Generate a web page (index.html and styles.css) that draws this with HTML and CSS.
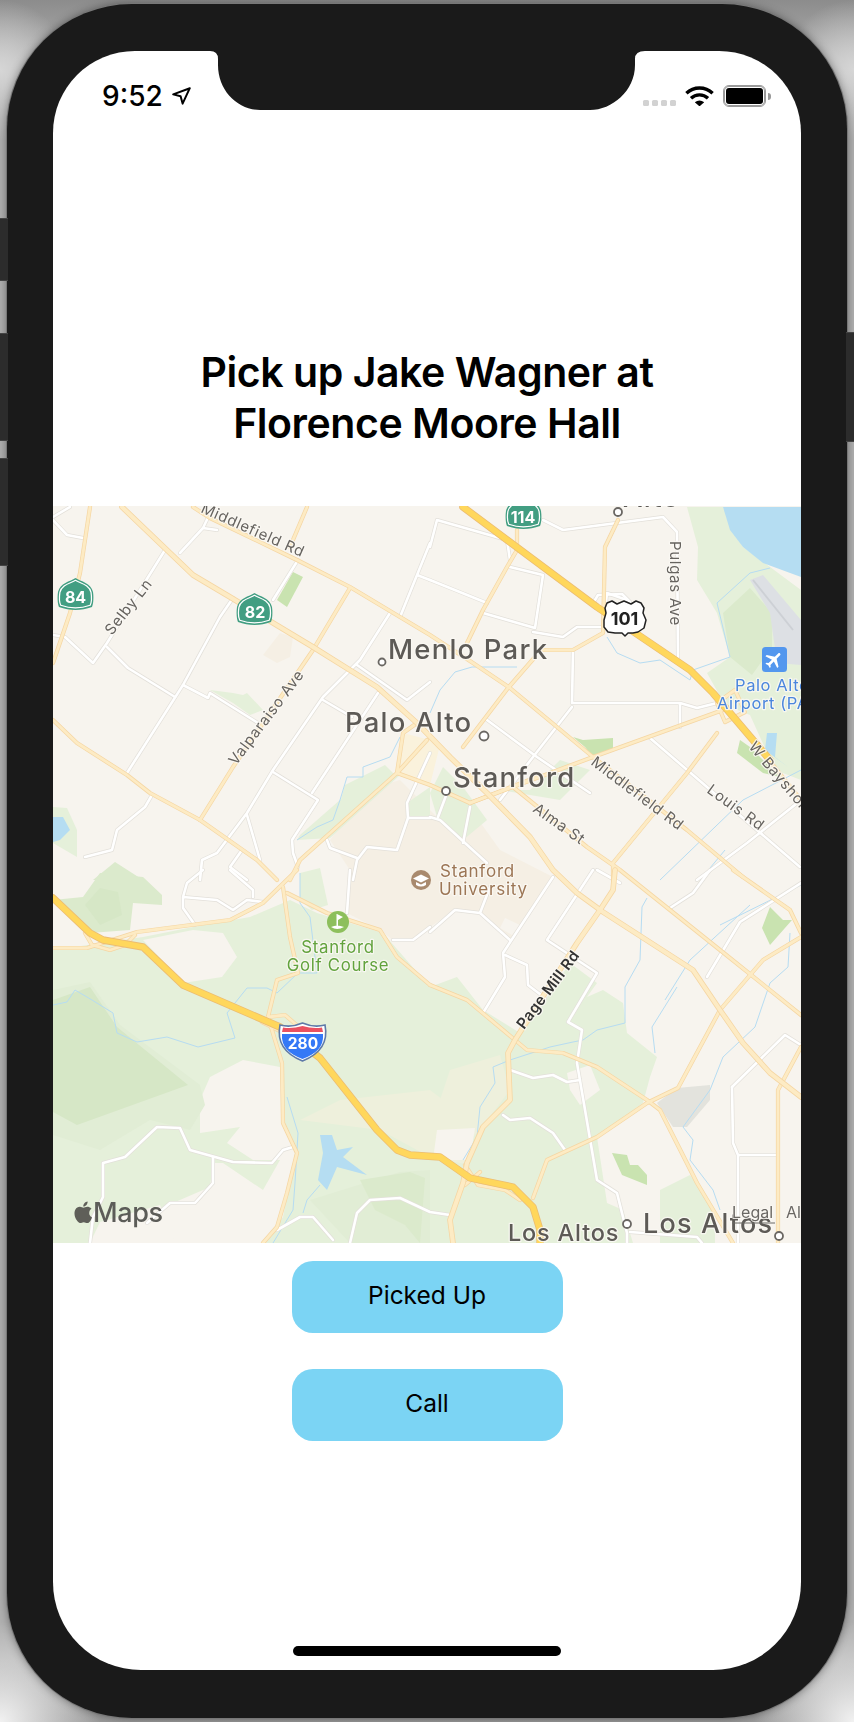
FILE: index.html
```html
<!DOCTYPE html>
<html lang="en">
<head>
<meta charset="utf-8">
<title>Pick up</title>
<link rel="stylesheet" href="styles.css">
</head>
<body>
<div class="device">
  <span class="side side-l1"></span>
  <span class="side side-l2"></span>
  <span class="side side-l3"></span>
  <span class="side side-r1"></span>
  <main class="screen">
    <svg class="notch" viewBox="0 0 435 59" width="435" height="59" aria-hidden="true">
      <path d="M0 0Q8 0 8 8V14C8 40 28 59 50 59H380C402 59 425 40 425 14V8Q425 0 435 0Z"/>
    </svg>
    <header class="status">
      <div class="status-left">
        <span class="time">9:52</span>
        <svg class="loc" viewBox="0 0 19 18" width="19" height="18"><path d="M1.2 7.4 17.8 1.2 10.6 16.6 8.6 9.2Z"/></svg>
      </div>
      <div class="status-right">
        <span class="signal"><i></i><i></i><i></i><i></i></span>
        <svg class="wifi" viewBox="0 0 29 21" width="29" height="21">
          <path class="wifi-arc" d="M1.4 8.2A19 19 0 0 1 27.6 8.2"/>
          <path class="wifi-arc" d="M6 13.2A12.4 12.4 0 0 1 23 13.2"/>
          <path class="wifi-dot" d="M9.8 17.2Q14.5 13.8 19.2 17.2L14.5 21.4Z"/>
        </svg>
        <span class="battery"><span class="battery-fill"></span></span>
        <span class="battery-cap"></span>
      </div>
    </header>
    <h1 class="title">Pick up Jake Wagner at<br>Florence Moore Hall</h1>

    <svg class="map" viewBox="53 506 748 737" width="748" height="737" role="img" aria-label="Map of Palo Alto and Stanford">
      <defs>
        <g id="minor">
          <path d="M127 773 183 685 220 617 233 598"/>
          <path d="M53 635 65 637 93 663 107 643 165 550"/>
          <path d="M107 647 128 668 175 697"/>
          <path d="M183 685 208 698 210 693 258 723"/>
          <path d="M53 520 67 535 83 538M53 517 70 507"/>
          <path d="M180 553 203 528 217 530M203 528 213 507"/>
          <path d="M273 600 298 560"/>
          <path d="M390 613 360 660 323 697 273 770 247 813 217 853 202 860 200 880"/>
          <path d="M273 772 318 800 292 840 293 853 298 867"/>
          <path d="M378 693 312 793"/>
          <path d="M323 700 352 717"/>
          <path d="M357 665 407 700 430 682"/>
          <path d="M400 617 430 543M417 575 430 580"/>
          <path d="M152 795 145 807 117 830 112 850 85 857"/>
          <path d="M247 815 260 860M242 850 230 867 247 880"/>
          <path d="M430 753 407 803 408 818 430 818"/>
          <path d="M408 818 397 850 367 847 357 860 353 880M327 840 330 848 357 858"/>
          <path d="M437 520 507 540 510 560M437 520 430 547"/>
          <path d="M543 520 563 530 663 517 677 532 678 657"/>
          <path d="M510 567 543 575 535 628 483 613M430 580 487 603"/>
          <path d="M533 632 563 637 577 627 603 627 607 593 627 600"/>
          <path d="M573 650 572 703H680L697 708 717 703M680 703V727"/>
          <path d="M572 707 533 757 500 800"/>
          <path d="M487 720 537 757 590 793"/>
          <path d="M650 738 800 867"/>
          <path d="M801 800 747 843 697 880"/>
          <path d="M430 817 440 820 465 843 487 863"/>
          <path d="M447 793 438 817M470 807 463 843"/>
          <path d="M593 870 547 940 597 973 568 1022 582 1030 577 1063 597 1180 617 1193 627 1233V1243"/>
          <path d="M553 877 503 953 505 977 483 1013"/>
          <path d="M505 955 527 965 528 985 545 998"/>
          <path d="M430 932 455 910 480 913 510 940M480 913 490 887"/>
          <path d="M510 1070 533 1078 553 1075 567 1082 580 1080"/>
          <path d="M503 1115 510 1120 530 1118 553 1133 565 1150"/>
          <path d="M597 870 620 883M670 908 693 893 710 870"/>
          <path d="M707 977 740 922 801 883"/>
          <path d="M732 1087 733 1143 738 1155V1243M738 1155H778"/>
          <path d="M732 1087 785 1035 801 1045"/>
          <path d="M630 1232 697 1237 702 1243"/>
          <path d="M183 897 217 900 233 910 247 900 263 902M183 897V908L195 925M203 870 187 883 183 897M230 870 253 890V897"/>
          <path d="M350 870 347 913M393 940H413L430 927"/>
          <path d="M90 1243 93 1217 103 1197V1163L125 1157 157 1127 180 1128 190 1150 233 1162 272 1163 283 1150 293 1147"/>
          <path d="M213 1157V1183L195 1203H170L147 1223"/>
          <path d="M277 1230 300 1217H313L333 1240"/>
          <path d="M350 1243 357 1213 370 1200 400 1198 430 1212 450 1215"/>
          <path d="M592 605 598 595 622 594 630 602"/>
        </g>
        <g id="arterial">
          <path d="M193 507 210 518 297 560 350 587 430 635 473 663 510 688 557 727 593 757 687 830 743 877"/>
          <path d="M733 870 790 910 801 933"/>
          <path d="M513 787 587 847 620 870 720 950 801 1015"/>
          <path d="M200 820 233 767 313 650 350 588"/>
          <path d="M307 507 290 547"/>
          <path d="M470 803 593 757 723 710"/>
          <path d="M467 643 483 610 507 567 517 550V530"/>
          <path d="M543 650H573L603 633 605 547 618 520"/>
          <path d="M535 657 508 688 463 747"/>
          <path d="M717 733 687 773 613 863V880"/>
          <path d="M430 985 467 1000 515 1040 527 1050 563 1053 597 1067 647 1100 660 1110 697 1183 733 1243"/>
          <path d="M533 1198 547 1160 597 1137 647 1103 678 1088 720 1010 763 960 801 937"/>
          <path d="M778 1243V1090L801 1047"/>
          <path d="M53 948H87L137 932 230 920 263 903 297 870"/>
          <path d="M290 880 300 860 397 773 427 740"/>
          <path d="M283 887 290 937 298 973 277 980 268 1017 282 1063 283 1123 297 1153 287 1193 277 1227 263 1243"/>
          <path d="M287 893 327 913 380 930 397 957 430 985"/>
          <path d="M53 720 77 743 127 775 150 793 200 820 257 860 277 880"/>
          <path d="M90 507 80 573 70 613 53 663"/>
          <path d="M397 773 403 733 417 723M397 773 430 785 470 803 537 777"/>
          <path d="M753 740 801 800"/>
          <path d="M85 933 92 945 110 950 125 945 135 935M268 1017 285 1015 300 1028M262 1022 282 1032"/>
          <path d="M465 1165 478 1185 505 1190 520 1200M465 1185 480 1172"/>
          <path d="M717 703 735 690 745 712 725 722Z"/>
        </g>
        <g id="primary">
          <path d="M122 507 193 575 230 597 313 647 377 687 417 723 450 757 487 793 530 837 553 870 577 893 603 912 693 970 720 1010 743 1043 770 1073 801 1097"/>
          <path d="M615 870 613 890 600 910 577 943 515 1040 508 1053 510 1100 483 1127 467 1163 463 1183 450 1220 453 1243"/>
        </g>
        <g id="highway">
          <path d="M53 898 90 933 103 940 143 947 183 985 280 1027 320 1058 377 1130 397 1150 410 1155 440 1157 470 1178 513 1187 533 1207 540 1230V1243"/>
          <path d="M463 507 597 607 690 670 713 693 753 740 770 760"/>
        </g>
        <path id="state-shield" d="M18.5 1C24 4.500 34 6 36 15 37 22 36 28 35 30 24 34 13 34 2 30 1 28 0 22 1 15 3 6 13 4.500 18.500 1Z"/>
      </defs>

      <rect class="land" x="53" y="506" width="748" height="737"/>

      <!-- parkland and terrain -->
      <path class="g-light" d="M53 950 143 937 193 927 250 917 290 900 317 913 383 933 430 987 457 977 483 1010 520 1033 543 1003 570 963 597 983 587 997 603 990 623 1003 627 1033 657 1057 650 1077 643 1103 597 1137 607 1203 623 1210 633 1243H53Z"/>
      <path class="g-mid" d="M53 900 83 897 100 873 143 877 162 895 162 905 133 903 130 930 90 933Z"/>
      <path class="g-mid2" d="M85 905 100 888 118 892 122 915 100 925Z"/>
      <path class="g-light" d="M300 873 320 868 328 905 312 910 300 900Z"/>
      <path class="land" d="M143 940 193 930 223 933 237 957 222 977 183 983 160 958Z"/>
      <path class="land" d="M200 1100 210 1077 243 1060 280 1067 283 1123 295 1153 283 1217 263 1243H150L143 1223 173 1203 210 1187 213 1163 223 1163 263 1190 280 1160 253 1160 227 1143 240 1127 200 1133Z"/>
      <path class="land" d="M90 1243 100 1222 160 1205 175 1243Z"/>
      <path class="g-soft" d="M53 990 90 982 120 1025 200 1085 205 1105 190 1130 150 1120 100 1150 53 1135Z"/>
      <path class="g-mid2" d="M53 1000 90 987 117 1027 188 1085 77 1125 53 1112Z"/>
      <path class="g-soft" d="M310 1200 400 1172 430 1170 430 1243H350Z"/>
      <path class="g-mid" d="M360 1180 410 1172 425 1178 420 1243 405 1225 375 1210Z"/>
      <path class="g-cream" d="M300 1120 340 1100 430 1090 470 1120 470 1165 430 1157 380 1130Z"/>
      <path class="g-cream" d="M450 1070 500 1055 510 1090 480 1130 460 1150 430 1130Z"/>
      <path class="land" d="M437 1130 475 1128 470 1160 433 1160Z"/>
      <path class="tan" d="M330 840 367 790 400 780 440 820 470 808 500 850 553 877 510 940 480 913 455 910 430 927 413 940 393 940 380 930 347 913 350 870Z"/>
      <path class="land" d="M505 918 520 925 512 935 500 928Z"/>
      <path class="yellow" d="M403 733 430 740 440 745 430 785 397 773Z"/>
      <path class="g-light" d="M430 793 443 767 463 787 487 820 463 840 437 817Z"/>
      <path class="g-light" d="M407 803 430 787 430 816 408 818Z"/>
      <path class="tan" d="M263 655 280 633 293 637 290 657 277 663Z"/>
      <path class="g-light" d="M210 690 233 693 243 695 247 693 263 710 250 715 233 703Z"/>
      <path class="g-light" d="M297 840 330 838 400 775 397 775 340 800 300 835Z"/>
      <path class="g-light" d="M335 820 345 785 385 765 395 775 360 805Z"/>
      <path class="g-light" d="M53 807 67 808 77 830 77 857 53 843Z"/>
      <path class="g-mid" d="M93 880 115 862 143 880Z"/>
      <path class="g-light" d="M687 507 723 507 743 547 801 590 801 780 775 770 750 715 725 705 707 673 730 657 717 613 697 580 698 547Z"/>
      <path class="g-mid" d="M723 613 750 588 772 613 772 647 752 675 730 657Z"/>
      <path class="g-light" d="M500 790 530 790 560 760 590 770 560 800Z"/>
      <path class="land" d="M567 1073 590 1065 600 1090 580 1105 570 1090Z"/>

      <!-- parks -->
      <path class="park" d="M277 600 293 572 303 577 287 607Z"/>
      <path class="park" d="M740 740 750 747 780 777 763 773 737 753Z"/>
      <path class="park" d="M573 737 583 740 613 738V750L593 757 585 747Z"/>
      <path class="park" d="M612 1153 627 1155 630 1165H638L647 1175V1185L622 1175Z"/>
      <path class="park" d="M770 907 783 920H792L770 945 762 928Z"/>
      <path class="g-light" d="M660 1190 690 1175 715 1210 715 1243 660 1243Z"/>
      <path class="grey" d="M657 1103 677 1088 710 1085V1100L687 1127H673Z"/>

      <!-- water -->
      <path class="water" d="M723 507H801V577L763 563 743 547 730 530Z"/>
      <path class="water" d="M792 633 801 620V643Z"/>
      <path class="water" d="M767 733H777L775 757 788 767 765 750Z"/>
      <path class="water" d="M53 817H63L70 830 60 840 53 842Z"/>
      <path class="water" d="M320 1135H332L337 1150 353 1147 343 1157 367 1175 337 1167 327 1190 318 1180 323 1153Z"/>

      <!-- airport -->
      <path class="airfield" d="M750 580 763 575 801 620V665L777 663 770 613Z"/>
      <path class="runway" d="M753 580 793 630"/>

      <!-- streams -->
      <g class="stream">
        <path d="M647 898 642 907 640 960 625 987V1023L597 1030 583 1040 573 1042 550 1047 510 1060 493 1067 495 1083 480 1107 477 1137 463 1160"/>
        <path d="M677 987 652 1027 655 1053"/>
        <path d="M790 933 788 967 770 983 755 1027 723 1057 710 1090 683 1127 693 1140 690 1160 713 1190 720 1210"/>
        <path d="M53 1005 67 1002 75 990 92 1000 113 1013 117 1033 137 1042 167 1037 198 1047 235 1038 227 1013 247 988H267L277 993 298 973H317L310 917 300 903V873"/>
        <path d="M287 1097 298 1133 295 1183 293 1210 273 1243"/>
        <path d="M320 1185 307 1200 303 1213"/>
        <path d="M297 840 317 827 333 820 340 800 347 777H363V767L390 757 400 737"/>
        <path d="M430 713 440 690 455 672 472 667H517"/>
        <path d="M607 637 617 653 640 663 660 660 690 680 693 670 730 657 717 603 750 573 770 568"/>
        <path d="M660 880 743 800 801 770"/>
        <path d="M700 880 725 850"/>
        <path d="M750 905 690 960 665 1000"/>
        <path d="M801 885 720 925"/>
      </g>

      <!-- roads -->
      <use href="#minor" class="road minor-casing"/>
      <use href="#minor" class="road minor-fill"/>
      <use href="#arterial" class="road arterial-casing"/>
      <use href="#arterial" class="road arterial-fill"/>
      <use href="#primary" class="road primary-casing"/>
      <use href="#primary" class="road primary-fill"/>
      <use href="#highway" class="road highway-casing"/>
      <use href="#highway" class="road highway-fill"/>

      <!-- shields -->
      <use href="#state-shield" class="shield-state" x="57" y="577"/>
      <use href="#state-shield" class="shield-state" x="236" y="592"/>
      <use href="#state-shield" class="shield-state" x="505" y="496"/>
      <g class="shield-inner">
        <use href="#state-shield" transform="translate(59 579.500) scale(.89 .86)"/>
        <use href="#state-shield" transform="translate(238 594.500) scale(.89 .86)"/>
        <use href="#state-shield" transform="translate(507 498.500) scale(.89 .86)"/>
      </g>
      <text class="shield-num" x="75.500" y="602.500">84</text>
      <text class="shield-num" x="255" y="617.500">82</text>
      <text class="shield-num" x="523" y="522.500">114</text>

      <path class="shield-us" d="M607 603 612 601 617 604 624 601 631 604 636 601 641 603 644 608 643 613 646 620 644 628 638 632 633 633 628 633 625 636 622 633 615 633 608 632 604 627 604 620 606 613 605 608Z"/>
      <text class="shield-us-num" x="624.500" y="625">101</text>

      <path class="shield-i" d="M280 1025Q291 1028 302.500 1023 314 1028 325 1025 330 1050 302.500 1061 275 1050 280 1025Z"/>
      <path class="shield-i-red" d="M283 1027.500Q292 1029 302.500 1026 313 1029 322 1027.500L323 1032H282Z"/>
      <path class="shield-i-blue" d="M282 1034H323C324 1047 316 1054 302.500 1059 289 1054 281 1047 282 1034Z"/>
      <text class="shield-i-num" x="303" y="1049">280</text>

      <!-- place dots -->
      <circle class="dot" cx="382" cy="662" r="3.500"/>
      <circle class="dot" cx="484" cy="736" r="4.500"/>
      <circle class="dot" cx="446" cy="791" r="4"/>
      <circle class="dot" cx="618" cy="512" r="4"/>
      <circle class="dot" cx="627" cy="1224" r="4"/>
      <circle class="dot" cx="779" cy="1236" r="4"/>

      <!-- labels -->
      <text class="place" x="388" y="659">Menlo Park</text>
      <text class="place" x="345" y="732">Palo Alto</text>
      <text class="place" x="453" y="787">Stanford</text>
      <text class="place" x="623" y="507">Alto</text>
      <text class="place place-sm" x="508" y="1241">Los Altos</text>
      <text class="place place-md" x="643" y="1233">Los Altos</text>

      <text class="street" transform="translate(200 512) rotate(24)">Middlefield Rd</text>
      <text class="street" transform="translate(112 636) rotate(-52)">Selby Ln</text>
      <text class="street" transform="translate(236 766) rotate(-53)">Valparaiso Ave</text>
      <text class="street" transform="translate(670 541) rotate(90)">Pulgas Ave</text>
      <text class="street" transform="translate(532 811) rotate(35)">Alma St</text>
      <text class="street" transform="translate(590 764) rotate(37)">Middlefield Rd</text>
      <text class="street" transform="translate(706 792) rotate(36)">Louis Rd</text>
      <text class="street" transform="translate(748 747) rotate(50)">W Bayshore</text>
      <text class="street street-dark" transform="translate(524 1030) rotate(-53)">Page Mill Rd</text>

      <rect class="airport-badge" x="762" y="647" width="25" height="25" rx="3.500"/>
      <path class="airport-plane" transform="translate(764 649.500) rotate(45 10.500 10) scale(.88)" d="M21 16v-2l-8-5V3.500c0-.83-.67-1.500-1.500-1.500S10 2.670 10 3.500V9l-8 5v2l8-2.500V19l-2 1.500V22l3.500-1 3.500 1v-1.500L13 19v-5.500l8 2.500z"/>
      <text class="airport" x="735" y="691">Palo Alto</text>
      <text class="airport" x="717" y="709">Airport (PAO)</text>

      <circle class="poi-uni" cx="421" cy="880" r="10"/>
      <path class="poi-glyph" d="M421 874.500 429 878.500 421 882.500 413 878.500ZM416 882V885Q421 888 426 885V882L421 884.500Z"/>
      <text class="uni" x="440" y="877">Stanford</text>
      <text class="uni" x="439" y="895">University</text>

      <circle class="poi-golf" cx="338" cy="922" r="11"/>
      <path class="poi-glyph" d="M337 914 343 917 338 920V926H336.500V914ZM331 927Q337 924 344 927 337 931 331 927Z"/>
      <text class="golf" x="338" y="953">Stanford</text>
      <text class="golf" x="338" y="971">Golf Course</text>

      <path class="apple" transform="translate(72.500 1201.500) scale(.9)" d="M12.152 6.896c-.948 0-2.415-1.078-3.960-1.040-2.040.027-3.910 1.183-4.961 3.014-2.117 3.675-.546 9.103 1.519 12.090 1.013 1.454 2.208 3.090 3.792 3.039 1.520-.065 2.090-.987 3.935-.987 1.831 0 2.350.987 3.960.948 1.637-.026 2.676-1.480 3.676-2.948 1.156-1.688 1.636-3.325 1.662-3.415-.039-.013-3.182-1.221-3.220-4.857-.026-3.040 2.480-4.494 2.597-4.559-1.429-2.090-3.623-2.324-4.390-2.376-2-.156-3.675 1.090-4.610 1.090zM15.530 3.830c.843-1.012 1.400-2.427 1.245-3.830-1.207.052-2.662.805-3.532 1.818-.780.896-1.454 2.338-1.273 3.714 1.338.104 2.715-.688 3.559-1.701"/>
      <text class="maps-word" x="93" y="1222">Maps</text>
      <text class="legal" x="732" y="1218">Legal</text>
      <path class="legal-line" d="M732 1223H775"/>
      <text class="legal" x="786" y="1218">Alto</text>
    </svg>

    <div class="actions">
      <button class="action" type="button">Picked Up</button>
      <button class="action" type="button">Call</button>
    </div>
    <div class="home-indicator"></div>
  </main>
</div>
</body>
</html>
```
FILE: styles.css
```css
* { box-sizing: border-box; }

html, body { margin: 0; height: 100%; }

body {
  width: 854px;
  height: 1722px;
  padding: 4px 7px 0;
  overflow: hidden;
  background:
    radial-gradient(circle at 0 1722px, #f2f2f2 0, rgba(242,242,242,0) 100px),
    radial-gradient(circle at 854px 1722px, #f2f2f2 0, rgba(242,242,242,0) 100px),
    radial-gradient(circle at 0 70px, #d6d6d6 0, rgba(214,214,214,0) 70px),
    radial-gradient(circle at 854px 70px, #d6d6d6 0, rgba(214,214,214,0) 70px),
    linear-gradient(#8c8c8c 0, #b0b0b0 60px, #b0b0b0 1660px, #9a9a9a 1722px);
  font-family: Inter, "Liberation Sans", sans-serif;
}

.device {
  position: relative;
  width: 840px;
  height: 1714px;
  padding: 47px 46px 48px;
  background: #1a1a1a;
  border-radius: 125px;
  box-shadow: 0 0 0 1px #777, 0 0 10px rgba(0,0,0,.45);
}

.side {
  position: absolute;
  width: 8px;
  background: #2c2c2c;
  border-top: 1px solid #444;
  border-bottom: 1px solid #444;
}
.side-l1 { left: -7px; top: 214px; height: 63px; }
.side-l2 { left: -7px; top: 329px; height: 108px; }
.side-l3 { left: -7px; top: 454px; height: 108px; }
.side-r1 { right: -7px; top: 328px; height: 110px; }

.screen {
  position: relative;
  display: flex;
  flex-direction: column;
  align-items: center;
  width: 748px;
  height: 1619px;
  background: #fff;
  border-radius: 82px 82px 88px 88px;
  overflow: hidden;
}

.notch {
  position: absolute;
  left: 157px;
  top: 0;
  fill: #1a1a1a;
}

.status {
  display: flex;
  justify-content: space-between;
  align-self: stretch;
  height: 80px;
  padding: 0 30px 0 49px;
}

.status-left {
  display: flex;
  align-items: center;
  gap: 9px;
  height: 30px;
  margin-top: 30px;
}

.time {
  font-size: 28px;
  line-height: 30px;
  font-weight: 500;
  color: #000;
}

.loc {
  fill: none;
  stroke: #000;
  stroke-width: 2;
  stroke-linejoin: round;
}

.status-right {
  display: flex;
  align-items: flex-start;
  height: 22px;
  margin-top: 34px;
}

.signal {
  display: flex;
  gap: 3px;
  margin: 15px 9px 0 0;
}
.signal i {
  width: 6px;
  height: 6px;
  border-radius: 1.5px;
  background: #d2d2d2;
}

.wifi { margin-right: 9px; }
.wifi-arc { fill: none; stroke: #000; stroke-width: 3.4; }
.wifi-dot { fill: #000; }

.battery {
  display: block;
  width: 43px;
  height: 22px;
  padding: 2px;
  border: 1px solid #9a9a9a;
  box-shadow: inset 0 0 0 1px #9a9a9a;
  border-radius: 6px;
  background: #fff;
}
.battery-fill {
  display: block;
  width: 100%;
  height: 100%;
  background: #000;
  border-radius: 3px;
}
.battery-cap {
  width: 3px;
  height: 7px;
  margin: 8px 0 0 2px;
  background: #9a9a9a;
  border-radius: 0 3px 3px 0;
}

.title {
  margin: 216px 0 0;
  height: 159px;
  font-size: 41px;
  line-height: 51px;
  font-weight: 600;
  letter-spacing: -.45px;
  color: #000;
  text-align: center;
}

.map {
  display: block;
  flex: none;
  filter: blur(.35px);
}

.actions {
  display: flex;
  flex-direction: column;
  align-items: center;
  gap: 36px;
  padding-top: 18px;
}

.action {
  display: block;
  width: 271px;
  height: 72px;
  padding: 0 0 4px;
  border: 0;
  border-radius: 21px;
  background: #7bd4f4;
  color: #000;
  font: 400 24.5px/30px Inter, "Liberation Sans", sans-serif;
}

.home-indicator {
  width: 268px;
  height: 10px;
  margin: auto 0 14px;
  background: #000;
  border-radius: 5px;
}

/* map surfaces */
.land { fill: #f7f4ee; }
.g-light { fill: #e5f0da; }
.g-soft { fill: #e1edd5; }
.g-mid { fill: #dbeacc; }
.g-mid2 { fill: #d6e7c6; }
.g-cream { fill: #eef0dc; }
.tan { fill: #f5efe4; }
.yellow { fill: #faf2dc; }
.park { fill: #c9e3b0; }
.grey { fill: #e3e3dd; }
.water { fill: #b5ddf2; }
.airfield { fill: #dde0e4; }
.runway { fill: none; stroke: #cdd0d5; stroke-width: 2; }
.stream { fill: none; stroke: #b6dcf2; stroke-width: 1; }

/* roads */
.road { fill: none; stroke-linejoin: round; stroke-linecap: round; }
.minor-casing { stroke: #e3e0da; stroke-width: 4; }
.minor-fill { stroke: #fff; stroke-width: 2.6; }
.arterial-casing { stroke: #f5d6a3; stroke-width: 4.2; }
.arterial-fill { stroke: #fdebc4; stroke-width: 2.8; }
.primary-casing { stroke: #f5d6a3; stroke-width: 5.6; }
.primary-fill { stroke: #fdebc4; stroke-width: 4; }
.highway-casing { stroke: #ecbd72; stroke-width: 7.4; }
.highway-fill { stroke: #ffd75c; stroke-width: 5.8; }

/* shields */
.shield-state { fill: #429e82; }
.shield-inner { fill: none; stroke: #fff; stroke-width: 1.4; }
.shield-num {
  font: 700 16px Inter, sans-serif;
  fill: #fff;
  text-anchor: middle;
}
.shield-us { fill: #fff; stroke: #222; stroke-width: 1.5; stroke-linejoin: round; }
.shield-us-num {
  font: 700 18px Inter, sans-serif;
  fill: #222;
  text-anchor: middle;
}
.shield-i { fill: #fff; stroke: #5f7aa8; stroke-width: 1.6; }
.shield-i-red { fill: #ea5160; }
.shield-i-blue { fill: #3478f6; }
.shield-i-num {
  font: 700 15.5px Inter, sans-serif;
  fill: #fff;
  text-anchor: middle;
}

/* labels */
.dot { fill: #fff; stroke: #6a6763; stroke-width: 1.8; }

.place, .street, .uni, .golf, .airport, .maps-word, .legal {
  font-family: Inter, sans-serif;
  paint-order: stroke;
  stroke: rgba(250,248,243,.85);
  stroke-width: 2.5px;
  stroke-linejoin: round;
}
.place { font-size: 27.5px; font-weight: 500; fill: #5d5a56; letter-spacing: 1.2px; }
.place-sm { font-size: 23.5px; letter-spacing: .8px; }
.place-md { font-size: 27px; }
.street { font-size: 15px; fill: #66635f; letter-spacing: .7px; }
.street-dark { fill: #333; font-weight: 600; letter-spacing: .4px; }
.uni { font-size: 17px; fill: #9c7655; letter-spacing: .8px; }
.golf { font-size: 16.8px; fill: #62a33d; letter-spacing: .7px; text-anchor: middle; }
.airport { font-size: 16.5px; fill: #4a86dd; letter-spacing: .6px; }
.airport-badge { fill: #5397ee; }
.airport-plane { fill: #fff; }
.poi-uni { fill: #a98a6e; }
.poi-golf { fill: #8dbf5c; }
.poi-glyph { fill: #fff; }
.apple { fill: #5f5f59; }
.maps-word { font-size: 27px; font-weight: 500; fill: #5c5c58; letter-spacing: -.4px; stroke: none; }
.legal { font-size: 16px; fill: #6b6864; stroke-width: 2px; }
.legal-line { stroke: #6b6864; stroke-width: 1; }
```
